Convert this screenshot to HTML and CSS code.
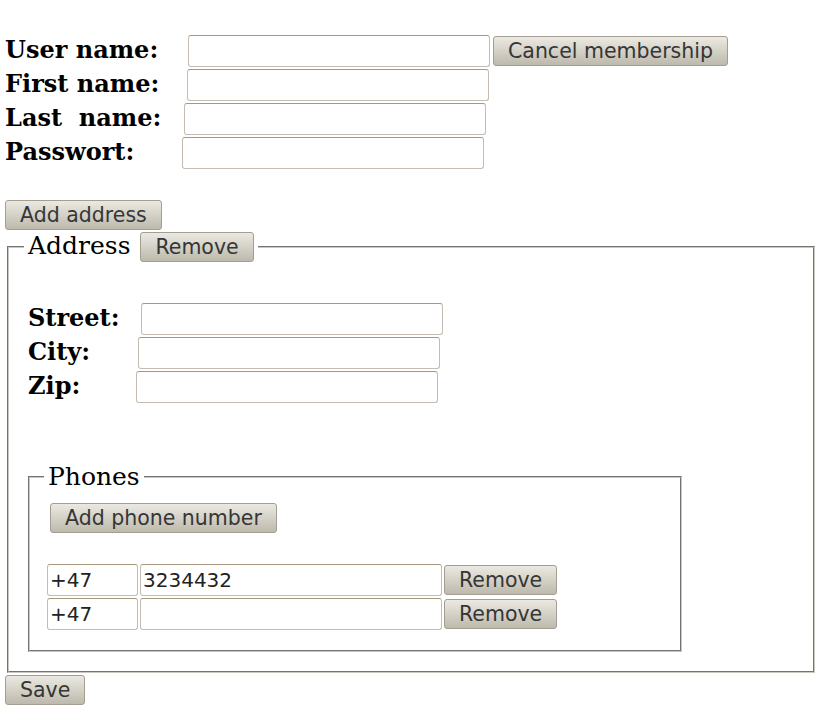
FILE: index.html
```html
<!DOCTYPE html>
<html>
<head>
<meta charset="utf-8">
<link rel="stylesheet" href="styles.css">
</head>
<body>
<form class="form">
  <div class="row">
    <label class="lbl lbl-user">User name:</label>
    <input class="field" type="text">
    <button type="button" class="btn btn-cancel">Cancel membership</button>
  </div>
  <div class="row">
    <label class="lbl lbl-first">First name:</label>
    <input class="field" type="text">
  </div>
  <div class="row">
    <label class="lbl lbl-last">Last&nbsp;&nbsp;name:</label>
    <input class="field" type="text">
  </div>
  <div class="row">
    <label class="lbl lbl-pass">Passwort:</label>
    <input class="field" type="password">
  </div>

  <div class="add-address"><button type="button" class="btn">Add address</button></div>

  <fieldset class="group address">
    <legend class="legend"><span class="legend-inner"><span class="legend-text">Address</span><button type="button" class="btn">Remove</button></span></legend>
    <div class="address-fields">
      <div class="row">
        <label class="lbl lbl-street">Street:</label>
        <input class="field" type="text">
      </div>
      <div class="row">
        <label class="lbl lbl-city">City:</label>
        <input class="field" type="text">
      </div>
      <div class="row">
        <label class="lbl lbl-zip">Zip:</label>
        <input class="field" type="text">
      </div>
    </div>

    <fieldset class="group phones">
      <legend class="legend legend-plain">Phones</legend>
      <button type="button" class="btn btn-addphone">Add phone number</button>
      <div class="phone-list">
        <div class="row phone-row">
          <input class="field field-code" type="text" value="+47">
          <input class="field" type="text" value="3234432">
          <button type="button" class="btn">Remove</button>
        </div>
        <div class="row phone-row">
          <input class="field field-code" type="text" value="+47">
          <input class="field" type="text" value="">
          <button type="button" class="btn">Remove</button>
        </div>
      </div>
    </fieldset>
  </fieldset>

  <div class="save-row"><button type="button" class="btn">Save</button></div>
</form>
</body>
</html>
```
FILE: styles.css
```css
html, body {
  margin: 0;
  background: #ffffff;
}
body {
  padding: 34px 11px 0 5px;
  font-family: "DejaVu Serif", serif;
  color: #000;
}
.form {
  margin: 0;
}
.row {
  display: flex;
  align-items: center;
  height: 34px;
}
.lbl {
  flex: none;
  font-weight: bold;
  font-size: 24px;
  line-height: 28px;
  margin-bottom: 2px;
  white-space: nowrap;
}
.lbl-user { width: 183px; }
.lbl-first { width: 182px; }
.lbl-last { width: 179px; }
.lbl-pass { width: 177px; }
.lbl-street { width: 113px; }
.lbl-city { width: 110px; }
.lbl-zip { width: 108px; }

.field {
  flex: none;
  box-sizing: border-box;
  width: 302px;
  height: 32px;
  margin: 0;
  padding: 0 2px;
  border: 1px solid #c4bcb0;
  border-top-color: #a8987f;
  border-radius: 3px;
  background: #fff;
  font-family: "DejaVu Sans", sans-serif;
  font-size: 20px;
  color: #222;
  outline: none;
}
.field-code {
  width: 91px;
  margin-right: 2px;
}

.btn {
  flex: none;
  box-sizing: border-box;
  height: 30px;
  margin: 0;
  padding: 0 14px;
  border: 1px solid #a39e90;
  border-radius: 3px;
  background: linear-gradient(#ebe9e2, #bdb9ac);
  font-family: "DejaVu Sans", sans-serif;
  font-size: 20.5px;
  line-height: 28px;
  color: #363636;
  white-space: nowrap;
}
.btn-cancel {
  margin-left: 3px;
}

.add-address {
  margin-top: 30px;
  display: flex;
}

.group {
  margin: 0;
  border: 2px groove #c8c8c0;
  min-width: 0;
}
.address {
  margin: 2px 2px 0 2px;
  padding: 0 17px 19px 19px;
}
.legend {
  margin-left: -4px;
  padding: 0 4px;
}
.legend-inner {
  display: flex;
  align-items: center;
  height: 30px;
}
.legend-text {
  font-size: 25px;
  margin-right: 10px;
  margin-bottom: 3px;
}
.legend-plain {
  font-size: 25px;
  line-height: 28px;
  margin-left: -3px;
}
.address-fields {
  margin-top: 40px;
}

.phones {
  box-sizing: border-box;
  width: 654px;
  margin: 59px 0 0 0;
  padding: 0 10px 19px 17px;
}
.btn-addphone {
  display: block;
  margin: 12px 0 0 3px;
}
.phone-list {
  margin-top: 30px;
}
.phone-row .btn {
  margin-left: 2px;
}

.save-row {
  margin-top: 2px;
  display: flex;
}
```
